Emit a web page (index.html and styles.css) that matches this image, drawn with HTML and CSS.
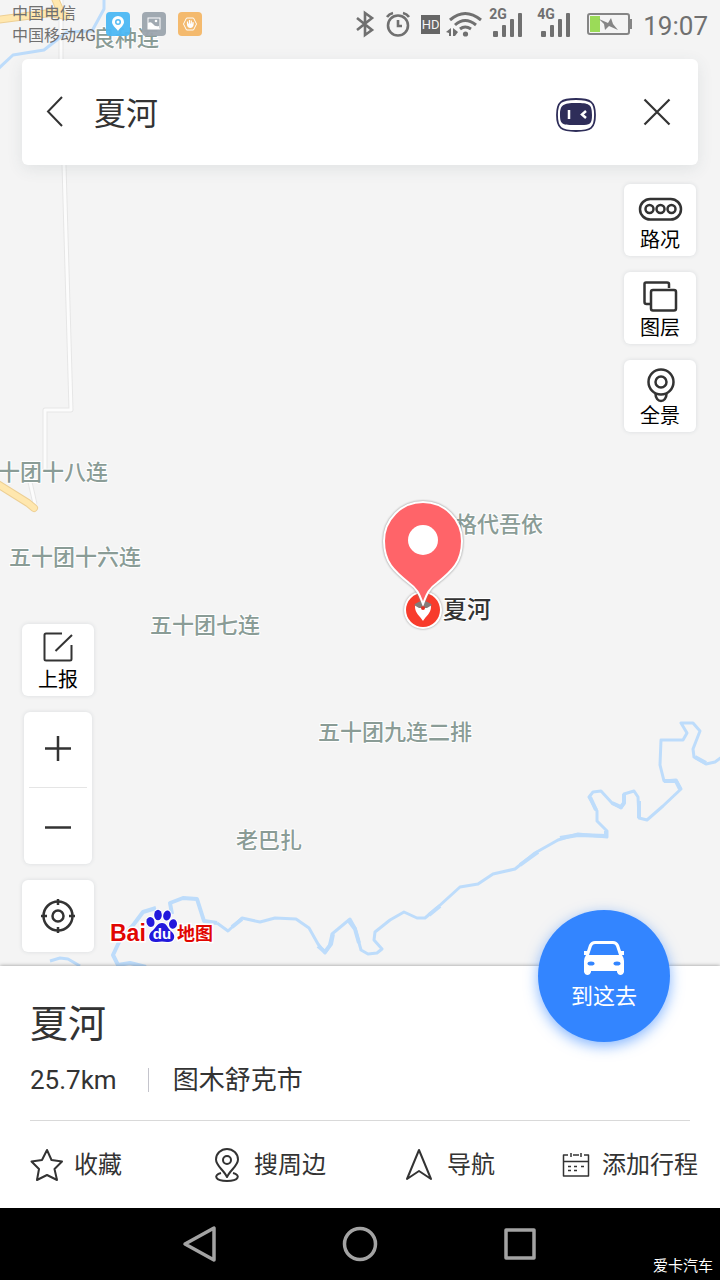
FILE: index.html
```html
<!DOCTYPE html>
<html lang="zh-CN">
<head>
<meta charset="utf-8">
<meta name="viewport" content="width=device-width, initial-scale=1">
<title>夏河</title>
<link rel="stylesheet" href="styles.css">
</head>
<body>
<div class="app">
  <main class="map">
    <svg class="map-canvas" viewBox="0 0 720 966" preserveAspectRatio="xMidYMid slice" role="img" aria-label="地图">
      <g class="lane-edge"><path d="M61 0V80L64 165L71 410H45V470M30 482L35 504"/></g>
      <g class="lane"><path d="M61 0V80L64 165L71 410H45V470M30 482L35 504"/></g>
      <g class="river">
        <path d="M104 -4V9L92 31L67 32L44 50L13 55L-2 69"/>
        <path d="M50 961L60 958L68 959L80 966"/>
        <path class="wide" d="M146 967L130 963L118 965L113 955L120 940L134 924L143 912L156 908M172 914L170 903L183 898L197 899L204 921L217 923"/>
        <path d="M217 923L228 931L242 918L260 922L275 918L296 919L309 928L318 944L325 953L329 947L332 934L350 919L355 928L361 950L368 954L377 953L382 949L374 940L375 932L390 920L404 912L417 918L425 918L438 907L460 887L478 884L493 874L515 869L535 853L558 840L578 834L607 837V831L597 821V811L589 797L593 792L601 791L612 803L621 808L624 803V794L634 791L638 797L639 818L647 820L663 806L681 789L676 780L664 781L660 765L661 740H683L687 733L681 723H693L700 731L693 749L694 757L706 764L715 762L722 757"/>
        <path class="wide" d="M232 927L242 919M318 946L325 952L331 944L333 934M349 921L355 929L359 943M429 915L440 906M520 865L538 852M560 838L578 835L606 836V831M590 797L596 810M612 803L621 807L624 803V794M639 801V818M680 789L676 781L664 781M695 757L706 763"/>
      </g>
      <g class="highway-edge"><path d="M-4 20L50 13L66 16M54 -4L62 15M-4 483L28 503L34 508"/></g>
      <g class="highway"><path d="M-4 20L50 13L66 16M54 -4L62 15M-4 483L28 503L34 508"/></g>
      <g class="place">
        <text x="93" y="46">良种连</text>
        <text x="-2" y="480">十团十八连</text>
        <text x="9" y="565">五十团十六连</text>
        <text x="150" y="633">五十团七连</text>
        <text x="318" y="740">五十团九连二排</text>
        <text x="236" y="848">老巴扎</text>
        <text x="455" y="532">格代吾依</text>
      </g>
      <text class="place-main" x="443" y="618">夏河</text>
      <circle class="spot-ring" cx="423" cy="610" r="19"/>
      <circle cx="423" cy="610" r="17" fill="#f83c2c"/>
      <path d="M415 607Q415 602 423 606Q431 602 431 607C431 613 426 616 423 621C420 616 415 613 415 607Z" fill="#fff"/>
      <path d="M414 605Q423 597 432 605L427 608H419Z" fill="#847b78"/>
      <circle cx="423" cy="608" r="2" fill="#e22d20"/>
      <path class="pin" d="M423 604C420 597 419 590 409 583C394 571 384 562 384 541A39 39 0 0 1 462 541C462 562 452 571 437 583C427 590 426 597 423 604Z"/>
      <circle cx="423" cy="540" r="15" fill="#fff"/>
    </svg>

    <header class="status">
      <div class="carriers"><span>中国电信</span><span>中国移动4G</span></div>
      <div class="notices">
        <svg width="24" height="24" viewBox="0 0 24 24"><rect width="24" height="24" rx="4" fill="#4cb9f5"/><path d="M12 19C9 15 6 13 6 10a6 6 0 0 1 12 0c0 3-3 5-6 9Z" fill="#fff"/><circle cx="12" cy="10" r="3" fill="#4cb9f5"/><circle cx="12" cy="10" r="1.5" fill="#fff"/></svg>
        <svg width="24" height="24" viewBox="0 0 24 24"><rect width="24" height="24" rx="4" fill="#9ca5ae"/><rect x="6" y="6" width="12" height="11" fill="none" stroke="#fff" stroke-width="1"/><path d="M6 16V11Q9 9 11 12T17 14V17H6Z" fill="#fff"/><circle cx="14" cy="9" r="1.3" fill="#fff"/></svg>
        <svg width="24" height="24" viewBox="0 0 24 24"><rect width="24" height="24" rx="4" fill="#f4b767"/><path d="M8.500 6H15.500L18.500 12L15.500 18H8.500L5.500 12Z" fill="none" stroke="#fff" stroke-width="1"/><path d="M9.500 12V9.500M11.500 12V8M13.300 12V8.500M15 12V10" stroke="#fff" stroke-width="1.200"/><path d="M9 11.500H15.600V13Q15 16 12.300 16T9 13Z" fill="#fff"/></svg>
      </div>
      <div class="signals">
        <svg width="20" height="28" viewBox="0 0 20 28" fill="none" stroke="#707070" stroke-width="2.600"><path d="M2 8L17 20L10 25V3L17 8L2 20"/></svg>
        <svg width="26" height="28" viewBox="0 0 26 28" fill="none" stroke="#707070" stroke-width="2.600"><circle cx="13" cy="15.500" r="10"/><path d="M13 10V16H17M2 7Q4 4 8 3M24 7Q22 4 18 3"/></svg>
        <span class="hd">HD</span>
        <svg width="38" height="28" viewBox="0 0 38 28" fill="none" stroke="#707070" stroke-width="3"><path d="M5 10Q20 -3 36 10M10 15Q20 6 31 15M15 19Q20 15 26 19"/><circle cx="20.500" cy="24" r="2.600" fill="#707070" stroke="none"/><path d="M1 22L6 18V26H4V23ZM8 18L13 22L10 26H8Z" fill="#707070" stroke="none"/></svg>
        <span class="cell"><b>2G</b><svg width="34" height="28" viewBox="0 0 34 28" fill="#707070"><rect x="4" y="21" width="5" height="6" rx="1"/><rect x="13" y="15" width="4" height="12" rx="1"/><rect x="21" y="9" width="4" height="18" rx="1"/><rect x="29" y="3" width="4" height="24" rx="1"/></svg></span>
        <span class="cell"><b>4G</b><svg width="34" height="28" viewBox="0 0 34 28" fill="#707070"><rect x="4" y="21" width="5" height="6" rx="1"/><rect x="13" y="15" width="4" height="12" rx="1"/><rect x="21" y="9" width="4" height="18" rx="1"/><rect x="29" y="3" width="4" height="24" rx="1"/></svg></span>
        <svg class="battery" width="46" height="24" viewBox="0 0 46 24"><rect x="1" y="2" width="41" height="20" rx="2" fill="#f4f4f4" stroke="#858585" stroke-width="2"/><rect x="3" y="4" width="10" height="16" fill="#9bdb58"/><path d="M43 7H45V17H43Z" fill="#858585"/><path d="M12 7L21 11L24 6L26 12L31 18L22 14L18 18L17 12Z" fill="#858585"/></svg>
        <time>19:07</time>
      </div>
    </header>

    <form class="search">
      <button type="button" aria-label="返回"><svg width="20" height="34" viewBox="0 0 20 34" fill="none" stroke="#333" stroke-width="2"><path d="M16 2L2 16.500L16 31"/></svg></button>
      <input type="text" value="夏河" aria-label="搜索地点">
      <button type="button" aria-label="语音助手"><svg width="42" height="40" viewBox="0 0 42 40"><g transform="translate(0 5)"><path d="M21 2C36 2 40 5 40 18S36 34 21 34S2 31 2 18S6 2 21 2Z" fill="#fff" stroke="#2e2d59" stroke-width="1.800"/><path d="M21 6C34 6 37 7 37 18S34 28 21 28S5 28 5 18S8 6 21 6Z" fill="#2e2d59"/><path d="M14 13V22M31 14L27 17.500L31 21" fill="none" stroke="#fff" stroke-width="2.500"/></g></svg></button>
      <button type="button" class="close" aria-label="关闭"><svg width="28" height="28" viewBox="0 0 28 28" stroke="#333" stroke-width="2.200"><path d="M1.500 1.500L26.500 26.500M26.500 1.500L1.500 26.500"/></svg></button>
    </form>

    <div class="overlay">
      <div class="tools tools-left">
        <button type="button" class="tool"><svg viewBox="0 0 72 43"><path stroke-width="2" d="M40 9.500H24Q22.500 9.500 22.500 11V35Q22.500 36.500 24 36.500H48Q49.500 36.500 49.500 35V21M33.500 27L50 11"/></svg><span>上报</span></button>
        <div class="zoom">
          <button type="button" aria-label="放大"><svg width="28" height="28" viewBox="0 0 28 28"><path d="M1 12.500H27M14 0V25"/></svg></button>
          <button type="button" aria-label="缩小"><svg width="28" height="28" viewBox="0 0 28 28"><path d="M1 15.500H27"/></svg></button>
        </div>
        <button type="button" class="tool locate" aria-label="定位"><svg viewBox="0 0 72 72"><circle cx="36" cy="36" r="14.500"/><circle cx="36" cy="36" r="5.500"/><path d="M36 19V25M36 47V53M19 36H25M47 36H53"/></svg></button>
      </div>
      <svg class="baidu" width="102" height="34" viewBox="0 0 102 34" aria-label="百度地图">
        <text class="logo-latin" x="-1" y="32">Bai</text>
        <g fill="#2319dc" stroke="#fff" stroke-width="2" paint-order="stroke"><ellipse cx="39.500" cy="13" rx="4" ry="5" transform="rotate(-15 39.500 13)"/><ellipse cx="47" cy="6" rx="3.800" ry="5.200"/><ellipse cx="56" cy="6.500" rx="3.800" ry="5" transform="rotate(12 56 6.500)"/><ellipse cx="62" cy="15" rx="4" ry="4.800" transform="rotate(10 62 15)"/><path d="M51 14C56 14 56 19 61 23C66 28 62 34 56 33Q51 32 46 33C39 34 36 28 40 23C45 19 46 14 51 14Z"/></g>
        <text class="logo-du" x="51" y="30">du</text>
        <text class="logo-han" x="66" y="31">地图</text>
      </svg>
      <div class="tools tools-right">
        <button type="button" class="tool"><svg viewBox="0 0 72 43"><rect x="16" y="15" width="41" height="20.500" rx="10.250"/><circle cx="25.500" cy="25" r="4"/><circle cx="36.500" cy="25" r="4"/><circle cx="47.500" cy="25" r="4"/></svg><span>路况</span></button>
        <button type="button" class="tool"><svg viewBox="0 0 72 43"><path d="M26 32H22.500Q20.500 32 20.500 30V12Q20.500 10.500 22 10.500H43Q45 10.500 45 12V16"/><rect x="27" y="18" width="25" height="20.500" rx="2"/></svg><span>图层</span></button>
        <button type="button" class="tool"><svg viewBox="0 0 72 43"><circle cx="37" cy="22" r="12.500"/><circle cx="37" cy="22" r="5.500"/><path d="M31.500 34C31.500 38 34 41 37 41S42.500 38 42.500 34"/></svg><span>全景</span></button>
      </div>
    </div>
  </main>

  <section class="sheet">
    <button type="button" class="go"><svg width="42" height="34" viewBox="0 0 42 34"><path d="M12 0H30Q34 0 36 4L38 10H41V14H39Q41 17 41 20V31Q40 34 37.500 34T34 31V30H8V31Q7 34 4.500 34T1 31V20Q1 17 3 14H1V10H4L6 4Q8 0 12 0Z" fill="#fff"/><path d="M12 3H30Q32 3 33 5L36 14H6L9 5Q10 3 12 3Z" fill="#3385ff"/><ellipse cx="8" cy="22.500" rx="3.500" ry="2" fill="#3385ff"/><ellipse cx="34" cy="22.500" rx="3.500" ry="2" fill="#3385ff"/></svg><span>到这去</span></button>
    <div class="info">
      <h1>夏河</h1>
      <p><span class="distance">25.7km</span><span class="city">图木舒克市</span></p>
    </div>
    <div class="actions">
      <button type="button"><svg width="34" height="34" viewBox="0 0 34 34"><path d="M17 2L21.500 12L32 13.500L24.500 21L27 32L17 27L7 32L9 21L1.500 13.500L12 12Z"/></svg><span>收藏</span></button>
      <button type="button"><svg width="26" height="34" viewBox="0 0 26 34"><path d="M13 29C10 22 2 18 2 11.500A11 10.500 0 0 1 24 11.500C24 18 16 22 13 29Z"/><circle cx="13" cy="12" r="4"/><path d="M7 25C-1 27 1 33 13 33S27 27 19 25"/></svg><span>搜周边</span></button>
      <button type="button"><svg width="28" height="34" viewBox="0 0 28 34"><path d="M14 2L26 31L14 23L2 31Z"/></svg><span>导航</span></button>
      <button type="button"><svg class="calendar" width="28" height="28" viewBox="0 0 28 28"><path d="M6 4H1.500V25H26.500V4H22M11 4H17M9 2V6M19 2V6M1.500 10.500H26.500M6 15.500H9M12 15.500H15M19 15.500H22M6 19.500H9M12 19.500H15"/></svg><span>添加行程</span></button>
    </div>
  </section>

  <nav class="system">
    <button type="button" aria-label="返回键"><svg width="40" height="40" viewBox="0 0 40 40"><path d="M34 4V36L5 20Z"/></svg></button>
    <button type="button" aria-label="主屏幕"><svg width="40" height="40" viewBox="0 0 40 40"><circle cx="20" cy="20" r="15.500"/></svg></button>
    <button type="button" aria-label="最近任务"><svg width="40" height="40" viewBox="0 0 40 40"><rect x="6" y="6" width="28" height="28"/></svg></button>
    <span class="mark">爱卡汽车</span>
  </nav>
</div>
</body>
</html>
```

FILE: styles.css
```css
* { box-sizing: border-box; }

body {
  margin: 0;
  font-family: Roboto, "Noto Sans CJK SC", sans-serif;
  color: #333;
}

button {
  display: flex;
  align-items: center;
  justify-content: center;
  padding: 0;
  border: 0;
  background: none;
  color: inherit;
  font: inherit;
}

svg { display: block; flex-shrink: 0; }

.app {
  display: flex;
  flex-direction: column;
  min-height: 100vh;
}

/* Map */
.map {
  position: relative;
  display: flex;
  flex: 1;
  flex-direction: column;
  overflow: hidden;
  background: #f4f4f4;
}

.map-canvas {
  position: absolute;
  inset: 0;
  width: 100%;
  height: 100%;
}

.map-canvas g { fill: none; stroke-linejoin: round; }
.lane-edge { stroke: #e6e6e6; stroke-width: 5; }
.lane { stroke: #fcfcfc; stroke-width: 3; }
.river { stroke: #bddcfb; stroke-width: 3; }
.river .wide { stroke-width: 4; }
.highway-edge { stroke: #edcf94; stroke-width: 8; stroke-linecap: round; }
.highway { stroke: #ffe7ae; stroke-width: 6; stroke-linecap: round; }

.map-canvas .place {
  fill: #8a9c96;
  stroke: #fff;
  stroke-width: 2;
  paint-order: stroke;
  font-size: 22px;
  font-weight: 500;
}

.place-main {
  fill: #333;
  stroke: #fff;
  stroke-width: 2;
  paint-order: stroke;
  font-size: 24px;
  font-weight: 500;
}

.spot-ring { fill: #fff; filter: drop-shadow(0 0 1px #999); }

.pin {
  fill: #ff6469;
  stroke: #fff;
  stroke-width: 2;
  filter: drop-shadow(0 0 1px #888);
}

/* Status bar */
.status {
  position: relative;
  display: flex;
  align-items: flex-start;
  height: 48px;
  padding: 3px 12px 0;
  color: #707070;
}

.carriers {
  display: flex;
  flex-direction: column;
  width: 94px;
  font-size: 16px;
  line-height: 22px;
  white-space: nowrap;
}

.notices { display: flex; gap: 12px; padding-top: 9px; opacity: 0.95; }

.signals {
  display: flex;
  align-items: center;
  gap: 10px;
  height: 42px;
  margin-left: auto;
}

.hd {
  width: 19px;
  margin-right: -5px;
  background: #666;
  color: #f4f4f4;
  font-size: 13px;
  line-height: 19px;
  text-align: center;
}

.cell { position: relative; margin-left: -4px; }
.cell + .cell { margin-left: 4px; }
.cell b { position: absolute; top: -3px; left: 0; font-size: 14px; line-height: 14px; }
.battery { margin-left: 6px; }
.status time { padding-top: 3px; font-size: 26px; line-height: 40px; }

/* Search */
.search {
  position: relative;
  display: flex;
  align-items: center;
  height: 106px;
  margin: 11px 22px 0;
  padding: 0 27px 0 24px;
  border-radius: 6px;
  background: #fff;
  box-shadow: 0 4px 16px rgba(60, 80, 90, 0.1);
}

.search input {
  flex: 1;
  min-width: 0;
  margin-left: 28px;
  padding: 3px 0 0;
  border: 0;
  outline: 0;
  background: none;
  color: #333;
  font: inherit;
  font-size: 32px;
  line-height: 48px;
}

.close { margin-left: 46px; }

/* Map controls */
.overlay {
  position: relative;
  display: flex;
  flex: 1;
  gap: 17px;
  padding: 19px 24px 14px 22px;
}

.tools { display: flex; flex-direction: column; gap: 16px; }
.tools-left { align-items: center; justify-content: flex-end; }
.tools-right { margin-left: auto; }

.tool {
  flex-direction: column;
  justify-content: flex-start;
  width: 72px;
  height: 72px;
  border-radius: 6px;
  background: #fff;
  box-shadow: 0 0 4px rgba(60, 80, 90, 0.14);
  color: #000;
  font-size: 20px;
  line-height: 26px;
}

.tool svg, .zoom svg { fill: none; stroke: #333; stroke-width: 2.5; }
.tool svg { width: 72px; height: 43px; }
.tool.locate svg { height: 72px; }

.zoom {
  width: 68px;
  padding: 0 5px;
  border-radius: 6px;
  background: #fff;
  box-shadow: 0 0 4px rgba(60, 80, 90, 0.14);
}

.zoom button { width: 100%; height: 75px; }
.zoom button + button { height: 77px; border-top: 1px solid #e5e5e5; }

.baidu { align-self: flex-end; margin-bottom: 9px; overflow: visible; }
.logo-latin, .logo-han {
  fill: #e10602;
  stroke: #fff;
  stroke-width: 3;
  paint-order: stroke;
  font-weight: 700;
}
.logo-latin { font-family: "Liberation Sans", sans-serif; font-size: 23px; }
.logo-han { font-size: 18px; }
.logo-du {
  fill: #fff;
  font-family: "Liberation Sans", sans-serif;
  font-size: 15px;
  font-weight: 700;
  text-anchor: middle;
}

/* Place sheet */
.sheet {
  position: relative;
  background: #fff;
  box-shadow: 0 0 4px rgba(0, 0, 0, 0.4);
}

.go {
  position: absolute;
  top: -56px;
  right: 50px;
  flex-direction: column;
  gap: 5px;
  width: 132px;
  height: 132px;
  padding-top: 2px;
  border-radius: 50%;
  background: #3385ff;
  box-shadow: 0 4px 14px rgba(51, 133, 255, 0.6);
  color: #fff;
  font-size: 22px;
  line-height: 34px;
}

.info {
  margin: 0 30px;
  padding: 30px 0 20px;
  border-bottom: 1px solid #d9d9d9;
}

.info h1 { margin: 0; font-size: 38px; font-weight: 400; line-height: 56px; }

.info p {
  display: flex;
  align-items: center;
  margin: 8px 0 0;
  font-size: 26px;
  line-height: 40px;
}

.city { display: flex; align-items: center; }
.city::before {
  width: 1px;
  height: 24px;
  margin: 0 24px 0 31px;
  background: #c4c4cc;
  content: "";
}

.actions {
  display: grid;
  grid-template-columns: repeat(4, 1fr);
  height: 87px;
  padding-top: 1px;
}

.actions button { gap: 14px; font-size: 24px; line-height: 36px; white-space: nowrap; }
.actions button:first-child { justify-content: flex-start; padding-left: 30px; gap: 10px; }
.actions button:last-child { gap: 12px; }
.actions svg { fill: none; stroke: #333; stroke-width: 2; stroke-linejoin: round; }
.actions .calendar { stroke-width: 1.5; }

/* System navigation */
.system {
  position: relative;
  display: flex;
  align-items: center;
  justify-content: center;
  gap: 120px;
  height: 72px;
  background: #000;
}

.system svg { fill: none; stroke: #a3a3a3; stroke-width: 3.5; stroke-linejoin: round; }
.mark { position: absolute; right: 7px; bottom: 3px; color: #fff; font-size: 15px; line-height: 22px; }
```
